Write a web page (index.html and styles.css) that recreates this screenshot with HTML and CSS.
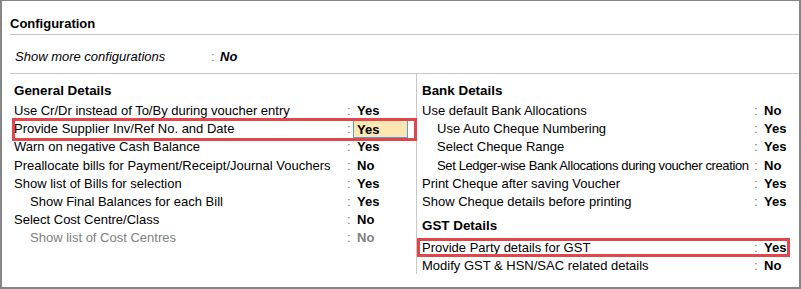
FILE: index.html
```html
<!DOCTYPE html>
<html>
<head>
<meta charset="utf-8">
<link rel="stylesheet" href="styles.css">
</head>
<body>
<div class="frame">
  <div class="title">Configuration</div>
  <div class="more">
    <span class="more-label">Show more configurations</span>
    <span class="colon">:</span>
    <span class="more-val">No</span>
  </div>
  <div class="cols">
    <div class="col col-left">
      <div class="head">General Details</div>
      <div class="row"><span class="lbl">Use Cr/Dr instead of To/By during voucher entry</span><span class="colon">:</span><span class="val">Yes</span></div>
      <div class="row mark mark-left"><span class="lbl">Provide Supplier Inv/Ref No. and Date</span><span class="colon">:</span><span class="val active">Yes</span></div>
      <div class="row"><span class="lbl">Warn on negative Cash Balance</span><span class="colon">:</span><span class="val">Yes</span></div>
      <div class="row"><span class="lbl">Preallocate bills for Payment/Receipt/Journal Vouchers</span><span class="colon">:</span><span class="val">No</span></div>
      <div class="row"><span class="lbl">Show list of Bills for selection</span><span class="colon">:</span><span class="val">Yes</span></div>
      <div class="row sub"><span class="lbl">Show Final Balances for each Bill</span><span class="colon">:</span><span class="val">Yes</span></div>
      <div class="row"><span class="lbl">Select Cost Centre/Class</span><span class="colon">:</span><span class="val">No</span></div>
      <div class="row sub off"><span class="lbl">Show list of Cost Centres</span><span class="colon">:</span><span class="val">No</span></div>
    </div>
    <div class="col col-right">
      <div class="head">Bank Details</div>
      <div class="row"><span class="lbl">Use default Bank Allocations</span><span class="colon">:</span><span class="val">No</span></div>
      <div class="row sub"><span class="lbl">Use Auto Cheque Numbering</span><span class="colon">:</span><span class="val">Yes</span></div>
      <div class="row sub"><span class="lbl">Select Cheque Range</span><span class="colon">:</span><span class="val">Yes</span></div>
      <div class="row sub"><span class="lbl tight">Set Ledger-wise Bank Allocations during voucher creation</span><span class="colon">:</span><span class="val">No</span></div>
      <div class="row"><span class="lbl">Print Cheque after saving Voucher</span><span class="colon">:</span><span class="val">Yes</span></div>
      <div class="row"><span class="lbl">Show Cheque details before printing</span><span class="colon">:</span><span class="val">Yes</span></div>
      <div class="head head-gst">GST Details</div>
      <div class="row mark mark-right"><span class="lbl">Provide Party details for GST</span><span class="colon">:</span><span class="val">Yes</span></div>
      <div class="row"><span class="lbl">Modify GST &amp; HSN/SAC related details</span><span class="colon">:</span><span class="val">No</span></div>
    </div>
  </div>
</div>
</body>
</html>
```

FILE: styles.css
```css
* { box-sizing: border-box; }
html, body { margin: 0; padding: 0; background: #fff; }
body {
  font-family: "Liberation Sans", Arial, sans-serif;
  font-size: 13px;
  color: #000;
}
.frame {
  width: 801px;
  height: 289px;
  border: 1px solid #858585;
  border-left-width: 2px;
  border-right-width: 2px;
  border-bottom-width: 2px;
  padding-left: 8px;
  overflow: hidden;
}
.title {
  height: 34px;
  padding-top: 15px;
  font-weight: bold;
  line-height: 16px;
  border-bottom: 1px solid #c8c8c8;
}
.more {
  height: 39px;
  display: flex;
  align-items: center;
  padding-top: 4px;
  border-bottom: 1px solid #c8c8c8;
  font-style: italic;
}
.more-label { padding-left: 5px; width: 201px; }
.more .colon { width: 9px; font-style: normal; }
.more-val { font-weight: bold; }
.colon { color: #777; }
.cols {
  display: flex;
  height: 200px;
}
.col { padding-top: 8px; min-width: 0; }
.col-left {
  flex: 0 0 407px;
  width: 407px;
  padding-left: 4px;
  border-right: 1px solid #c8c8c8;
}
.col-right {
  flex: 1 1 0;
  padding-left: 5px;
  padding-right: 9px;
}
.head {
  font-weight: bold;
  font-size: 13.4px;
  line-height: 18px;
  height: 18px;
  margin-bottom: 2px;
}
.head-gst { margin-top: 6px; margin-bottom: 4px; }
.row {
  display: grid;
  height: 18.2px;
  line-height: 18px;
  align-items: center;
  position: relative;
}
.col-left .row { grid-template-columns: 1fr 10px 55px 8px; }
.col-right .row { grid-template-columns: 1fr 10px 30px; }
.row .colon { padding-left: 4px; }
.lbl { white-space: nowrap; overflow: visible; }
.tight { letter-spacing: -0.37px; }
.sub .lbl { padding-left: 16px; }
.col-right .sub .lbl { padding-left: 15px; }
.val {
  font-weight: bold;
  padding-left: 4px;
  height: 18px;
  line-height: 17px;
}
.val.active {
  background: #fde6b2;
  border: 1px solid #5b9bd5;
  padding-left: 3px;
}
.off { color: #808080; }
.off .val { color: #808080; }
.mark::after {
  content: "";
  position: absolute;
  border: 3px solid #e0464a;
  pointer-events: none;
}
.mark-left::after { left: -2px; right: -1px; top: -2px; bottom: -3px; }
.mark-right::after { left: -5px; right: 0; top: -1px; bottom: 0; }
```
